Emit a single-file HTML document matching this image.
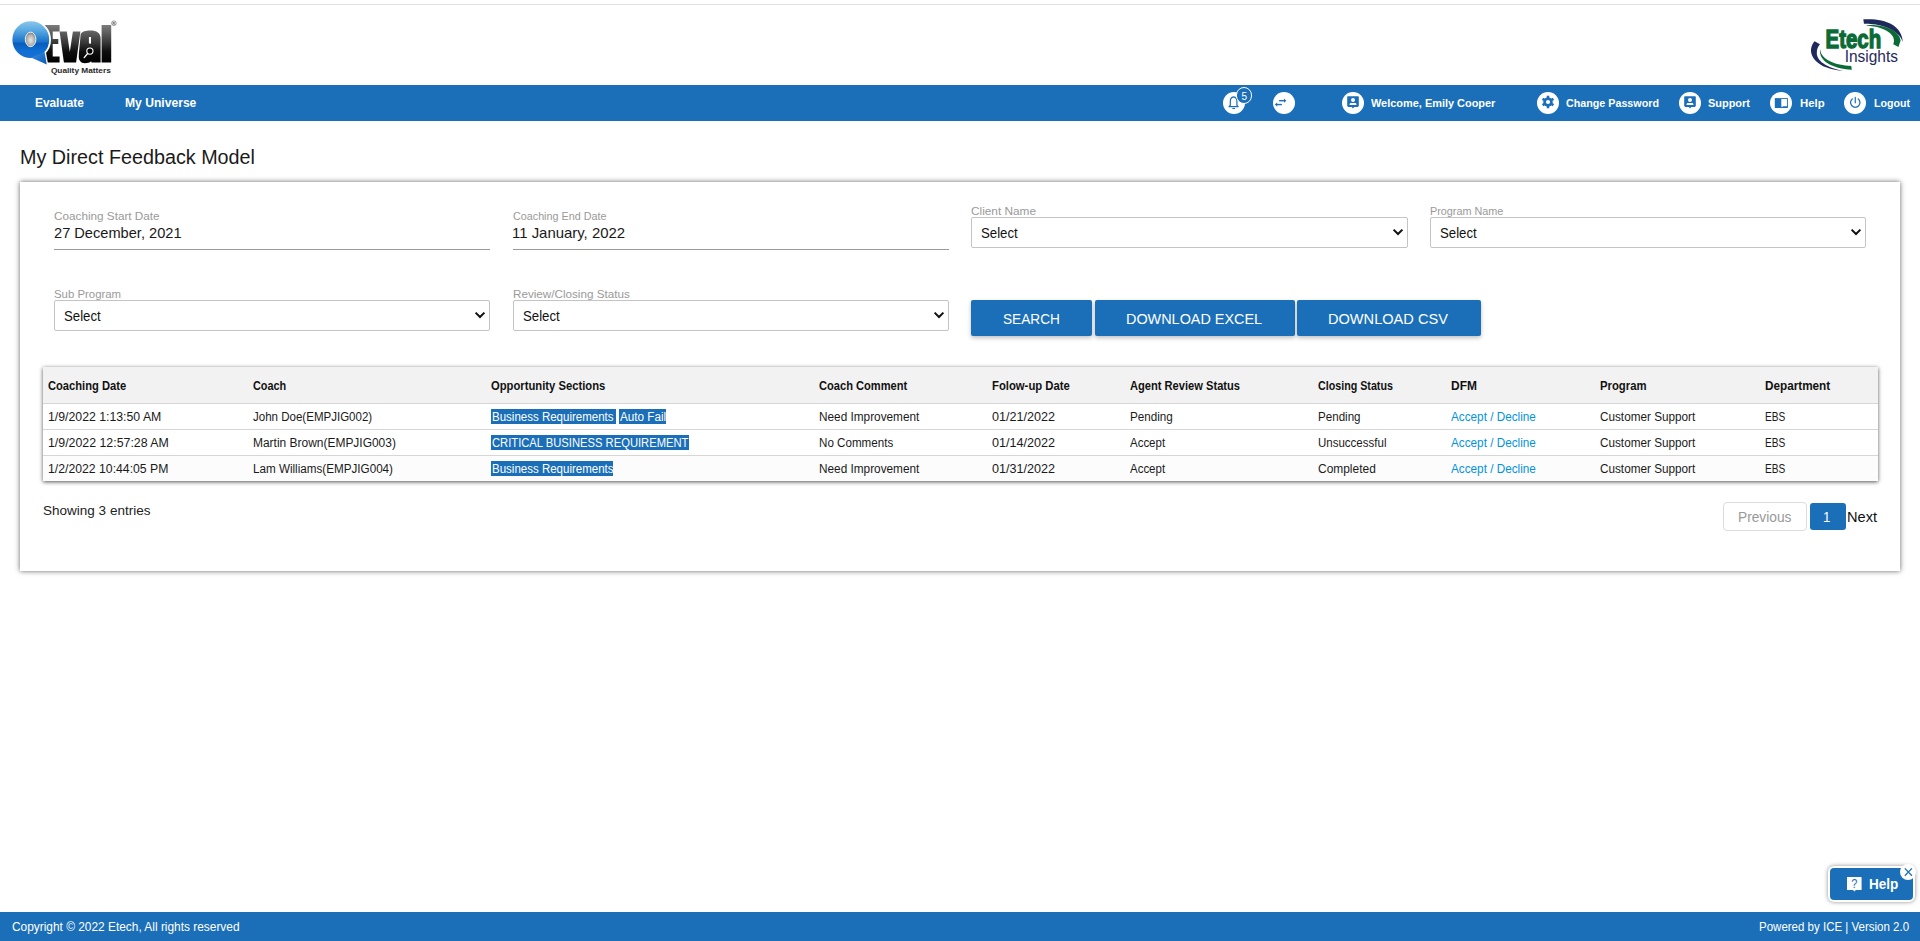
<!DOCTYPE html>
<html><head><meta charset="utf-8"><title>My Direct Feedback Model</title>
<style>
html,body{margin:0;padding:0;background:#fff;width:1920px;height:941px;overflow:hidden;position:relative;font-family:"Liberation Sans",sans-serif}
.t{position:absolute;white-space:nowrap;transform-origin:0 50%}
</style></head><body>
<div style="position:absolute;left:0;top:4px;width:1920px;height:1px;background:#dfe2e5"></div><svg style="position:absolute;left:0;top:0" width="130" height="85" viewBox="0 0 130 85">
<defs>
<linearGradient id="qb" x1="0" y1="0" x2="0" y2="1">
<stop offset="0" stop-color="#8fc8ec"/><stop offset="0.25" stop-color="#5aaae2"/><stop offset="0.55" stop-color="#1a74cc"/><stop offset="0.6" stop-color="#0a5cbc"/><stop offset="0.8" stop-color="#0f70d4"/><stop offset="1" stop-color="#1a6fd0"/></linearGradient>
<linearGradient id="qt" x1="0" y1="0" x2="1" y2="1"><stop offset="0" stop-color="#3a90e0"/><stop offset="1" stop-color="#0a58b8"/></linearGradient>
<radialGradient id="qh" cx="0.5" cy="0.55" r="0.6"><stop offset="0" stop-color="#e8e8e8"/><stop offset="0.6" stop-color="#b0b0b0"/><stop offset="1" stop-color="#606060"/></radialGradient>
<linearGradient id="ev" x1="0" y1="25" x2="0" y2="63" gradientUnits="userSpaceOnUse"><stop offset="0" stop-color="#7c7c7c"/><stop offset="0.45" stop-color="#3a3a3a"/><stop offset="0.7" stop-color="#0e0e0e"/><stop offset="1" stop-color="#000"/></linearGradient>
</defs>
<g fill="url(#ev)">
<path d="M44 25 H59.6 V31.4 H52.7 V38.9 H58.3 V43.9 H52.7 V56.6 H59.6 V62.5 H44 Z"/>
<path d="M59.6 31.4 H66.8 L69.8 51.9 L72.9 31.4 H80.4 L76.1 62.5 H63.9 Z"/>
<path d="M80.6 34.5 C82 31.5 86 30.6 90.3 30.6 C96.8 30.6 100.6 33.2 100.6 38.5 L100.6 62.5 L91.5 62.5 L91.2 61.3 C89.6 62.8 87.5 63.2 85 63.2 C80.6 63.2 78.4 60.2 78.8 55.5 C79.1 50.5 79.8 45 80.6 34.5 Z"/>
<rect x="101.6" y="25" width="9.6" height="37.5"/>
</g>
<path d="M88.9 37 H91 V43.4 C90 44 89.3 43.6 88.9 43 Z" fill="#fff"/>
<circle cx="89.9" cy="51.1" r="3.1" fill="#000" stroke="#fff" stroke-width="1.1"/>
<line x1="87.6" y1="53.5" x2="84.2" y2="57.6" stroke="#fff" stroke-width="1.3" stroke-linecap="round"/>
<path d="M31 57.2 L46.8 64.6 L44.5 51.5 Z" fill="#fff" stroke="#fff" stroke-width="2.6" stroke-linejoin="miter" stroke-miterlimit="3"/>
<circle cx="30.8" cy="39.7" r="19.3" fill="url(#qb)" stroke="#fff" stroke-width="1.8"/>
<path d="M31 57.6 L46.8 64.6 L44.5 52 Z" fill="url(#qt)"/>
<ellipse cx="30.6" cy="39.4" rx="5.3" ry="7.3" fill="url(#qh)" stroke="#fff" stroke-width="0.9"/>
<circle cx="113.9" cy="23.2" r="2.3" fill="none" stroke="#555" stroke-width="0.6"/><text x="113.9" y="24.6" font-family="Liberation Sans" font-weight="700" font-size="3.6" fill="#555" text-anchor="middle">R</text>
<text x="50.9" y="72.8" font-family="Liberation Sans" font-weight="700" font-size="7.4" fill="#2a2a2a" textLength="59.9" lengthAdjust="spacingAndGlyphs">Quality Matters</text>
</svg><svg style="position:absolute;left:1805px;top:15px" width="105" height="60" viewBox="0 0 1647 941">
<path d="M915 68 C1220 45 1520 140 1535 425 C1490 270 1260 135 925 138 Z" fill="#1f2a5c"/>
<path d="M960 160 C1200 140 1480 230 1500 400 L1465 500 L1385 460 C1440 330 1300 190 960 165 Z" fill="#0b6b36"/>
<path d="M150 410 C40 540 90 720 330 820 C420 860 520 870 600 875 C380 840 190 740 185 600 C185 540 200 500 235 460 Z" fill="#1f2a5c"/>
<path d="M235 545 C220 720 420 840 735 858 L725 800 C480 790 250 700 240 545 Z" fill="#0b6b36"/>
<text x="322" y="521" font-family="Liberation Sans" font-weight="700" font-size="412" fill="#0b6b36" stroke="#0b6b36" stroke-width="22" textLength="872" lengthAdjust="spacingAndGlyphs">Etech</text>
<text x="622" y="735" font-family="Liberation Sans" font-size="246" fill="#1f2a5c" textLength="836" lengthAdjust="spacingAndGlyphs">Insights</text>
</svg><div style="position:absolute;left:0;top:85px;width:1920px;height:36px;background:#1b6fb9"></div><div class="t" style="left:35.40px;top:95.02px;font-size:13.5px;line-height:16.2px;font-weight:700;color:#fff;transform:scaleX(0.8782);">Evaluate</div><div class="t" style="left:125.20px;top:95.02px;font-size:13.5px;line-height:16.2px;font-weight:700;color:#fff;transform:scaleX(0.8972);">My Universe</div><div style="position:absolute;left:1223.0px;top:91.8px;width:22px;height:22px;border-radius:50%;background:#fff"></div><svg style="position:absolute;left:1223px;top:92px" width="22" height="22" viewBox="0 0 22 22">
<path d="M6.1 14.7 L7.3 13.1 L7.3 9.0 C7.3 6.9 8.6 5.3 10.6 4.9 C12.6 5.3 13.9 6.9 13.9 9.0 L13.9 13.1 L15.1 14.7 Z" fill="none" stroke="#1b6fb9" stroke-width="1.2" stroke-linejoin="round"/>
<rect x="9.2" y="15.9" width="2.9" height="1.1" rx="0.5" fill="#1b6fb9"/></svg><div style="position:absolute;left:1235.95px;top:87.45px;width:14.5px;height:14.5px;border-radius:50%;background:#1b6fb9;border:1.3px solid #fff"></div><div class="t" style="left:1241.50px;top:90.63px;font-size:10px;line-height:12.0px;font-weight:400;color:#fff;">5</div><div style="position:absolute;left:1272.9px;top:91.8px;width:22px;height:22px;border-radius:50%;background:#fff"></div><svg style="position:absolute;left:1272.9px;top:91.8px" width="22" height="22" viewBox="0 0 22 22">
<path d="M6.1 8.7 H11.8" stroke="#1b6fb9" stroke-width="1.4"/><path d="M11 6.6 L13.3 8.7 L11 10.8 Z" fill="#1b6fb9"/>
<path d="M8.9 12.56 H3.4" stroke="#1b6fb9" stroke-width="1.4"/><path d="M4.2 10.46 L1.9 12.56 L4.2 14.66 Z" fill="#1b6fb9"/>
</svg><div style="position:absolute;left:1342.0px;top:92.0px;width:22px;height:22px;border-radius:50%;background:#fff"></div><svg style="position:absolute;left:1342px;top:92px" width="22" height="22" viewBox="0 0 22 22">
<path d="M5.8 4.2 H16.2 L16.8 4.8 V14.1 L15.8 15.1 H12.2 L11 16.5 L9.8 15.1 H6.2 L5.2 14.1 V4.8 Z" fill="#1b6fb9"/>
<circle cx="11" cy="8.0" r="2.0" fill="#fff"/><path d="M7.4 12.9 L8.1 11.1 H13.9 L14.6 12.9 Z" fill="#fff"/></svg><div class="t" style="left:1370.90px;top:96.80px;font-size:11.2px;line-height:13.44px;font-weight:700;color:#fff;transform:scaleX(0.9774);">Welcome, Emily Cooper</div><div style="position:absolute;left:1537.0px;top:91.9px;width:22px;height:22px;border-radius:50%;background:#fff"></div><svg style="position:absolute;left:1537px;top:92.4px" width="22" height="22" viewBox="0 0 22 22">
<path d="M9.70 5.80 L9.79 3.72 L12.21 3.72 L12.30 5.80 L13.99 6.77 L15.84 5.81 L17.05 7.90 L15.29 9.02 L15.29 10.98 L17.05 12.10 L15.84 14.19 L13.99 13.23 L12.30 14.20 L12.21 16.28 L9.79 16.28 L9.70 14.20 L8.01 13.23 L6.16 14.19 L4.95 12.10 L6.71 10.98 L6.71 9.02 L4.95 7.90 L6.16 5.81 L8.01 6.77 Z" fill="#1b6fb9"/><circle cx="11" cy="10.0" r="4.6" fill="#1b6fb9"/><circle cx="11" cy="10.0" r="2.1" fill="#fff"/></svg><div class="t" style="left:1566.10px;top:96.80px;font-size:11.2px;line-height:13.44px;font-weight:700;color:#fff;transform:scaleX(0.9583);">Change Password</div><div style="position:absolute;left:1679.0px;top:91.9px;width:22px;height:22px;border-radius:50%;background:#fff"></div><svg style="position:absolute;left:1679px;top:91.9px" width="22" height="22" viewBox="0 0 22 22">
<path d="M5.8 4.2 H16.2 L16.8 4.8 V14.1 L15.8 15.1 H12.2 L11 16.5 L9.8 15.1 H6.2 L5.2 14.1 V4.8 Z" fill="#1b6fb9"/>
<circle cx="11" cy="8.0" r="2.0" fill="#fff"/><path d="M7.4 12.9 L8.1 11.1 H13.9 L14.6 12.9 Z" fill="#fff"/></svg><div class="t" style="left:1708.00px;top:96.80px;font-size:11.2px;line-height:13.44px;font-weight:700;color:#fff;transform:scaleX(0.9780);">Support</div><div style="position:absolute;left:1770.0px;top:91.8px;width:22px;height:22px;border-radius:50%;background:#fff"></div><svg style="position:absolute;left:1770px;top:91.8px" width="22" height="22" viewBox="0 0 22 22">
<rect x="4.8" y="6.1" width="13.1" height="9.9" fill="#1b6fb9"/>
<path d="M11.3 7.1 H17 V14.25 H13.05 V14.8 H11.3 Z" fill="#fff"/></svg><div class="t" style="left:1799.80px;top:96.80px;font-size:11.2px;line-height:13.44px;font-weight:700;color:#fff;transform:scaleX(1.0160);">Help</div><div style="position:absolute;left:1844.0px;top:91.8px;width:22px;height:22px;border-radius:50%;background:#fff"></div><svg style="position:absolute;left:1844px;top:91.8px" width="22" height="22" viewBox="0 0 22 22">
<path d="M8.25 6.95 A4.7 4.7 0 1 0 14.29 6.95" fill="none" stroke="#1b6fb9" stroke-width="1.25" stroke-linecap="round"/>
<line x1="11.27" y1="5.4" x2="11.27" y2="10.8" stroke="#1b6fb9" stroke-width="1.2" stroke-linecap="round"/></svg><div class="t" style="left:1873.75px;top:96.80px;font-size:11.2px;line-height:13.44px;font-weight:700;color:#fff;transform:scaleX(0.9497);">Logout</div><div class="t" style="left:20.01px;top:145.07px;font-size:20px;line-height:24.0px;font-weight:400;color:#1a1a1a;transform:scaleX(0.9877);">My Direct Feedback Model</div><div style="position:absolute;left:20px;top:182px;width:1880px;height:389px;background:#fff;box-shadow:0 0 5px rgba(0,0,0,.62)"></div><div class="t" style="left:54.00px;top:209.72px;font-size:11.5px;line-height:13.8px;font-weight:400;color:#9a9a9a;transform:scaleX(1.0198);">Coaching Start Date</div><div class="t" style="left:54.20px;top:225.48px;font-size:14.5px;line-height:17.4px;font-weight:400;color:#1a1a1a;transform:scaleX(1.0080);">27 December, 2021</div><div style="position:absolute;left:54px;top:249px;width:436px;height:1px;background:#9a9a9a"></div><div class="t" style="left:513.00px;top:209.72px;font-size:11.5px;line-height:13.8px;font-weight:400;color:#9a9a9a;transform:scaleX(0.9362);">Coaching End Date</div><div class="t" style="left:512.17px;top:225.48px;font-size:14.5px;line-height:17.4px;font-weight:400;color:#1a1a1a;transform:scaleX(1.0290);">11 January, 2022</div><div style="position:absolute;left:513px;top:249px;width:436px;height:1px;background:#9a9a9a"></div><div class="t" style="left:971.30px;top:204.62px;font-size:11.5px;line-height:13.8px;font-weight:400;color:#9a9a9a;transform:scaleX(1.0274);">Client Name</div><div style="position:absolute;left:971px;top:217px;width:435px;height:29px;border:1px solid #c4c4c4;border-radius:2px;background:#fff"></div><div class="t" style="left:980.80px;top:224.95px;font-size:14px;line-height:16.8px;font-weight:400;color:#111;transform:scaleX(0.9431);">Select</div><svg style="position:absolute;left:1392px;top:228px" width="12" height="8" viewBox="0 0 12 8"><path d="M1.6 1.6 L6 6 L10.4 1.6" fill="none" stroke="#111" stroke-width="2"/></svg><div class="t" style="left:1430.30px;top:204.62px;font-size:11.5px;line-height:13.8px;font-weight:400;color:#9a9a9a;transform:scaleX(0.9411);">Program Name</div><div style="position:absolute;left:1430px;top:217px;width:434px;height:29px;border:1px solid #c4c4c4;border-radius:2px;background:#fff"></div><div class="t" style="left:1439.80px;top:224.95px;font-size:14px;line-height:16.8px;font-weight:400;color:#111;transform:scaleX(0.9431);">Select</div><svg style="position:absolute;left:1850px;top:228px" width="12" height="8" viewBox="0 0 12 8"><path d="M1.6 1.6 L6 6 L10.4 1.6" fill="none" stroke="#111" stroke-width="2"/></svg><div class="t" style="left:54.30px;top:287.62px;font-size:11.5px;line-height:13.8px;font-weight:400;color:#9a9a9a;transform:scaleX(0.9900);">Sub Program</div><div style="position:absolute;left:54px;top:300px;width:434px;height:29px;border:1px solid #c4c4c4;border-radius:2px;background:#fff"></div><div class="t" style="left:63.80px;top:307.95px;font-size:14px;line-height:16.8px;font-weight:400;color:#111;transform:scaleX(0.9431);">Select</div><svg style="position:absolute;left:474px;top:311px" width="12" height="8" viewBox="0 0 12 8"><path d="M1.6 1.6 L6 6 L10.4 1.6" fill="none" stroke="#111" stroke-width="2"/></svg><div class="t" style="left:513.30px;top:287.62px;font-size:11.5px;line-height:13.8px;font-weight:400;color:#9a9a9a;transform:scaleX(1.0147);">Review/Closing Status</div><div style="position:absolute;left:513px;top:300px;width:434px;height:29px;border:1px solid #c4c4c4;border-radius:2px;background:#fff"></div><div class="t" style="left:522.80px;top:307.95px;font-size:14px;line-height:16.8px;font-weight:400;color:#111;transform:scaleX(0.9431);">Select</div><svg style="position:absolute;left:933px;top:311px" width="12" height="8" viewBox="0 0 12 8"><path d="M1.6 1.6 L6 6 L10.4 1.6" fill="none" stroke="#111" stroke-width="2"/></svg><div style="position:absolute;left:971px;top:300px;width:121px;height:36px;background:#1b6fb9;border-radius:2px;box-shadow:0 2px 4px rgba(0,0,0,.25)"></div><div class="t" style="left:1003.40px;top:310.75px;font-size:14px;line-height:16.8px;font-weight:400;color:#fff;transform:scaleX(0.9749);">SEARCH</div><div style="position:absolute;left:1095px;top:300px;width:200px;height:36px;background:#1b6fb9;border-radius:2px;box-shadow:0 2px 4px rgba(0,0,0,.25)"></div><div class="t" style="left:1126.27px;top:310.75px;font-size:14px;line-height:16.8px;font-weight:400;color:#fff;transform:scaleX(1.0292);">DOWNLOAD EXCEL</div><div style="position:absolute;left:1297.3px;top:300px;width:183.70000000000005px;height:36px;background:#1b6fb9;border-radius:2px;box-shadow:0 2px 4px rgba(0,0,0,.25)"></div><div class="t" style="left:1328.46px;top:310.75px;font-size:14px;line-height:16.8px;font-weight:400;color:#fff;transform:scaleX(1.0411);">DOWNLOAD CSV</div><div style="position:absolute;left:43px;top:367px;width:1835px;height:114px;background:#fff;box-shadow:0 0.5px 4px rgba(0,0,0,.68)"></div><div style="position:absolute;left:43px;top:367px;width:1835px;height:36px;background:#f2f2f2"></div><div style="position:absolute;left:43px;top:403px;width:1835px;height:1px;background:#d6d6d6"></div><div style="position:absolute;left:43px;top:429px;width:1835px;height:1px;background:#d6d6d6"></div><div style="position:absolute;left:43px;top:455px;width:1835px;height:1px;background:#d6d6d6"></div><div style="position:absolute;left:43px;top:456px;width:1835px;height:25px;background:#fcfcfc"></div><div class="t" style="left:47.80px;top:379.24px;font-size:12px;line-height:14.4px;font-weight:700;color:#111;transform:scaleX(0.9296);">Coaching Date</div><div class="t" style="left:252.90px;top:379.24px;font-size:12px;line-height:14.4px;font-weight:700;color:#111;transform:scaleX(0.9052);">Coach</div><div class="t" style="left:491.00px;top:379.24px;font-size:12px;line-height:14.4px;font-weight:700;color:#111;transform:scaleX(0.9368);">Opportunity Sections</div><div class="t" style="left:818.75px;top:379.24px;font-size:12px;line-height:14.4px;font-weight:700;color:#111;transform:scaleX(0.9250);">Coach Comment</div><div class="t" style="left:992.20px;top:379.24px;font-size:12px;line-height:14.4px;font-weight:700;color:#111;transform:scaleX(0.9411);">Folow-up Date</div><div class="t" style="left:1130.30px;top:379.24px;font-size:12px;line-height:14.4px;font-weight:700;color:#111;transform:scaleX(0.9267);">Agent Review Status</div><div class="t" style="left:1317.80px;top:379.24px;font-size:12px;line-height:14.4px;font-weight:700;color:#111;transform:scaleX(0.8917);">Closing Status</div><div class="t" style="left:1451.10px;top:379.24px;font-size:12px;line-height:14.4px;font-weight:700;color:#111;transform:scaleX(0.9963);">DFM</div><div class="t" style="left:1599.60px;top:379.24px;font-size:12px;line-height:14.4px;font-weight:700;color:#111;transform:scaleX(0.9429);">Program</div><div class="t" style="left:1765.00px;top:379.24px;font-size:12px;line-height:14.4px;font-weight:700;color:#111;transform:scaleX(0.9778);">Department</div><div class="t" style="left:48.00px;top:409.64px;font-size:12px;line-height:14.4px;font-weight:400;color:#1a1a1a;transform:scaleX(1.0232);">1/9/2022 1:13:50 AM</div><div class="t" style="left:252.60px;top:409.64px;font-size:12px;line-height:14.4px;font-weight:400;color:#1a1a1a;transform:scaleX(0.9608);">John Doe(EMPJIG002)</div><div class="t" style="left:818.75px;top:409.64px;font-size:12px;line-height:14.4px;font-weight:400;color:#1a1a1a;transform:scaleX(0.9833);">Need Improvement</div><div class="t" style="left:992.20px;top:409.64px;font-size:12px;line-height:14.4px;font-weight:400;color:#1a1a1a;transform:scaleX(1.0499);">01/21/2022</div><div class="t" style="left:1130.30px;top:409.64px;font-size:12px;line-height:14.4px;font-weight:400;color:#1a1a1a;transform:scaleX(0.9731);">Pending</div><div class="t" style="left:1317.80px;top:409.64px;font-size:12px;line-height:14.4px;font-weight:400;color:#1a1a1a;transform:scaleX(0.9662);">Pending</div><div class="t" style="left:1599.60px;top:409.64px;font-size:12px;line-height:14.4px;font-weight:400;color:#1a1a1a;transform:scaleX(0.9781);">Customer Support</div><div class="t" style="left:1765.00px;top:409.64px;font-size:12px;line-height:14.4px;font-weight:400;color:#1a1a1a;transform:scaleX(0.8456);">EBS</div><div class="t" style="left:1451.20px;top:409.64px;font-size:12px;line-height:14.4px;font-weight:400;color:#0393dd;transform:scaleX(0.9789);">Accept / Decline</div><div class="t" style="left:48.00px;top:435.64px;font-size:12px;line-height:14.4px;font-weight:400;color:#1a1a1a;transform:scaleX(1.0288);">1/9/2022 12:57:28 AM</div><div class="t" style="left:252.60px;top:435.64px;font-size:12px;line-height:14.4px;font-weight:400;color:#1a1a1a;transform:scaleX(0.9967);">Martin Brown(EMPJIG003)</div><div class="t" style="left:818.75px;top:435.64px;font-size:12px;line-height:14.4px;font-weight:400;color:#1a1a1a;transform:scaleX(0.9682);">No Comments</div><div class="t" style="left:992.20px;top:435.64px;font-size:12px;line-height:14.4px;font-weight:400;color:#1a1a1a;transform:scaleX(1.0499);">01/14/2022</div><div class="t" style="left:1130.30px;top:435.64px;font-size:12px;line-height:14.4px;font-weight:400;color:#1a1a1a;transform:scaleX(0.9558);">Accept</div><div class="t" style="left:1317.80px;top:435.64px;font-size:12px;line-height:14.4px;font-weight:400;color:#1a1a1a;transform:scaleX(0.9590);">Unsuccessful</div><div class="t" style="left:1599.60px;top:435.64px;font-size:12px;line-height:14.4px;font-weight:400;color:#1a1a1a;transform:scaleX(0.9781);">Customer Support</div><div class="t" style="left:1765.00px;top:435.64px;font-size:12px;line-height:14.4px;font-weight:400;color:#1a1a1a;transform:scaleX(0.8456);">EBS</div><div class="t" style="left:1451.20px;top:435.64px;font-size:12px;line-height:14.4px;font-weight:400;color:#0393dd;transform:scaleX(0.9789);">Accept / Decline</div><div class="t" style="left:48.00px;top:461.64px;font-size:12px;line-height:14.4px;font-weight:400;color:#1a1a1a;transform:scaleX(1.0195);">1/2/2022 10:44:05 PM</div><div class="t" style="left:252.60px;top:461.64px;font-size:12px;line-height:14.4px;font-weight:400;color:#1a1a1a;transform:scaleX(0.9720);">Lam Williams(EMPJIG004)</div><div class="t" style="left:818.75px;top:461.64px;font-size:12px;line-height:14.4px;font-weight:400;color:#1a1a1a;transform:scaleX(0.9833);">Need Improvement</div><div class="t" style="left:992.20px;top:461.64px;font-size:12px;line-height:14.4px;font-weight:400;color:#1a1a1a;transform:scaleX(1.0499);">01/31/2022</div><div class="t" style="left:1130.30px;top:461.64px;font-size:12px;line-height:14.4px;font-weight:400;color:#1a1a1a;transform:scaleX(0.9558);">Accept</div><div class="t" style="left:1317.80px;top:461.64px;font-size:12px;line-height:14.4px;font-weight:400;color:#1a1a1a;transform:scaleX(0.9955);">Completed</div><div class="t" style="left:1599.60px;top:461.64px;font-size:12px;line-height:14.4px;font-weight:400;color:#1a1a1a;transform:scaleX(0.9781);">Customer Support</div><div class="t" style="left:1765.00px;top:461.64px;font-size:12px;line-height:14.4px;font-weight:400;color:#1a1a1a;transform:scaleX(0.8456);">EBS</div><div class="t" style="left:1451.20px;top:461.64px;font-size:12px;line-height:14.4px;font-weight:400;color:#0393dd;transform:scaleX(0.9789);">Accept / Decline</div><div style="position:absolute;left:491px;top:409px;width:125px;height:15px;background:#1b6fb9"></div><div class="t" style="left:491.50px;top:409.64px;font-size:12px;line-height:14.4px;font-weight:400;color:#fff;transform:scaleX(0.9588);">Business Requirements</div><div style="position:absolute;left:619px;top:409px;width:47px;height:15px;background:#1b6fb9"></div><div class="t" style="left:619.50px;top:409.64px;font-size:12px;line-height:14.4px;font-weight:400;color:#fff;transform:scaleX(0.9745);">Auto Fail</div><div style="position:absolute;left:491px;top:435px;width:198px;height:15px;background:#1b6fb9"></div><div class="t" style="left:491.50px;top:435.64px;font-size:12px;line-height:14.4px;font-weight:400;color:#fff;transform:scaleX(0.9344);">CRITICAL BUSINESS REQUIREMENT</div><div style="position:absolute;left:491px;top:461px;width:122px;height:15px;background:#1b6fb9"></div><div class="t" style="left:491.50px;top:461.64px;font-size:12px;line-height:14.4px;font-weight:400;color:#fff;transform:scaleX(0.9588);">Business Requirements</div><div class="t" style="left:42.80px;top:503.22px;font-size:13.5px;line-height:16.2px;font-weight:400;color:#222;transform:scaleX(1.0013);">Showing 3 entries</div><div style="position:absolute;left:1722.8px;top:502px;width:81.8px;height:27px;border:1px solid #dcdcdc;border-radius:4px;background:#fff"></div><div class="t" style="left:1737.62px;top:508.65px;font-size:14px;line-height:16.8px;font-weight:400;color:#999;transform:scaleX(0.9800);">Previous</div><div style="position:absolute;left:1810px;top:503px;width:36px;height:27px;border-radius:3px;background:#1b6fb9"></div><div class="t" style="left:1823.36px;top:508.65px;font-size:14px;line-height:16.8px;font-weight:400;color:#fff;transform:scaleX(0.9429);">1</div><div class="t" style="left:1847.16px;top:508.75px;font-size:14px;line-height:16.8px;font-weight:400;color:#111;transform:scaleX(1.0431);">Next</div><div style="position:absolute;left:1828px;top:866px;width:82.6px;height:32px;border:2px solid #fff;border-radius:6px;background:#1b6fb9;box-shadow:0 0 4px rgba(0,0,0,.45)"></div><svg style="position:absolute;left:1845px;top:875px" width="20" height="20" viewBox="0 0 20 20">
<path d="M2.6 2 H16 A0.6 0.6 0 0 1 16.6 2.6 V14.5 A0.6 0.6 0 0 1 16 15.1 H10.8 L9.4 16.6 L8 15.1 H2.6 A0.6 0.6 0 0 1 2 14.5 V2.6 A0.6 0.6 0 0 1 2.6 2 Z" fill="#fff"/>
<text x="9.3" y="13.1" font-family="Liberation Sans" font-size="13" fill="#1b6fb9" text-anchor="middle" transform="translate(9.3 0) scale(0.85 1) translate(-9.3 0)">?</text></svg><div class="t" style="left:1868.90px;top:875.55px;font-size:14px;line-height:16.8px;font-weight:700;color:#fff;transform:scaleX(0.9669);">Help</div><div style="position:absolute;left:1899.8px;top:863.6px;width:16.4px;height:16.4px;border-radius:50%;background:#fff"></div><svg style="position:absolute;left:1901px;top:865px" width="14" height="14" viewBox="0 0 14 14"><path d="M3.8 3.4 L10.9 10.7 M10.9 3.4 L3.8 10.7" stroke="#1b6fb9" stroke-width="1.3"/></svg><div style="position:absolute;left:0;top:912px;width:1920px;height:29px;background:#1b6fb9"></div><div class="t" style="left:11.50px;top:920.14px;font-size:12px;line-height:14.4px;font-weight:400;color:#fff;transform:scaleX(0.9908);">Copyright &copy; 2022 Etech, All rights reserved</div><div class="t" style="left:1758.70px;top:919.74px;font-size:12px;line-height:14.4px;font-weight:400;color:#fff;transform:scaleX(0.9588);">Powered by ICE | Version 2.0</div>
</body></html>
